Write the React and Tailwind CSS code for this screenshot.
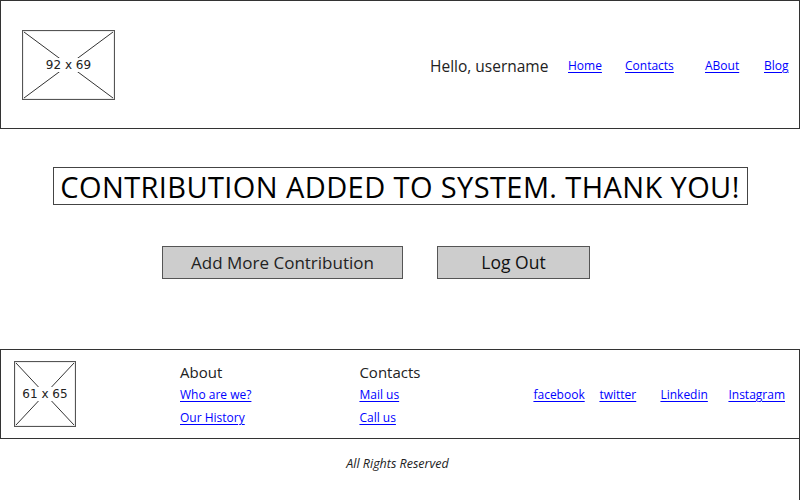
import React from 'react';

const font = { fontFamily: '"Comic Sans MS", "Open Sans", sans-serif' };

function Placeholder({ w, h, label }) {
  return (
    <div className="relative shrink-0" style={{ width: w, height: h }}>
      <svg width={w} height={h} className="absolute inset-0">
        <rect x="0.5" y="0.5" width={w - 1} height={h - 1} fill="white" stroke="#555" strokeWidth="1.2" />
        <line x1="2" y1="2" x2={w - 2} y2={h - 2} stroke="#333" strokeWidth="1" />
        <line x1={w - 2} y1="2" x2="2" y2={h - 2} stroke="#333" strokeWidth="1" />
      </svg>
      <div className="absolute inset-0 flex items-center justify-center">
        <span className="bg-white px-[1px] text-[12px] leading-[14px] text-[#222]" style={{ fontFamily: '"DejaVu Sans", sans-serif' }}>
          {label}
        </span>
      </div>
    </div>
  );
}

function Link({ children, className = '' }) {
  return <a href="#" className={`text-[#0000ff] underline underline-offset-2 ${className}`}>{children}</a>;
}

export default function App() {
  return (
    <div className="w-[800px] h-[500px] bg-white overflow-hidden flex flex-col text-[#222]" style={font}>
      <header className="h-[129px] shrink-0 border border-[#333] flex items-center">
        <div className="ml-[21px] mt-[1px]">
          <Placeholder w={93} h={70} label="92 x 69" />
        </div>
        <div className="ml-auto flex items-center mt-[5px]">
          <div className="w-[138px] text-[15.5px]">Hello, username</div>
          <div className="w-[57px] text-[12px] -mt-[2px]"><Link>Home</Link></div>
          <div className="w-[80px] text-[12px] -mt-[2px]"><Link>Contacts</Link></div>
          <div className="w-[59px] text-[12px] -mt-[2px]"><Link>ABout</Link></div>
          <div className="w-[35px] text-[12px] -mt-[2px]"><Link>Blog</Link></div>
        </div>
      </header>

      <div className="mt-[38px] flex justify-center">
        <div className="w-[695px] h-[38px] border border-[#444] flex items-center justify-center text-[29px] tracking-[0.4px] leading-none text-black">
          CONTRIBUTION ADDED TO SYSTEM. THANK YOU!
        </div>
      </div>

      <div className="mt-[41px] ml-[162px] flex gap-[34px]">
        <button className="w-[241px] h-[33px] bg-[#cdcdcd] border border-[#555] text-[17px] text-[#222]">
          Add More Contribution
        </button>
        <button className="w-[153px] h-[33px] bg-[#cdcdcd] border border-[#555] text-[17.5px] text-[#111]">
          Log Out
        </button>
      </div>

      <footer className="mt-[70px] h-[90px] shrink-0 border border-[#333] flex items-start">
        <div className="ml-[13px] mt-[11px]">
          <Placeholder w={62} h={66} label="61 x 65" />
        </div>
        <div className="ml-[104px] mt-[12px] flex flex-col">
          <div className="text-[15px] leading-[20px]">About</div>
          <div className="text-[12px] leading-[16px] mt-[5px]"><Link>Who are we?</Link></div>
          <div className="text-[12px] leading-[16px] mt-[7px]"><Link>Our History</Link></div>
        </div>
        <div className="ml-[108px] mt-[12px] flex flex-col">
          <div className="text-[15px] leading-[20px]">Contacts</div>
          <div className="text-[12px] leading-[16px] mt-[5px]"><Link>Mail us</Link></div>
          <div className="text-[12px] leading-[16px] mt-[7px]"><Link>Call us</Link></div>
        </div>
        <div className="ml-auto mt-[37px] flex text-[12px] leading-[16px] mr-[14px]">
          <div className="w-[66px]"><Link>facebook</Link></div>
          <div className="w-[61px]"><Link>twitter</Link></div>
          <div className="w-[68px]"><Link>Linkedin</Link></div>
          <div><Link>Instagram</Link></div>
        </div>
      </footer>

      <div className="flex-1 border-r border-[#333] flex justify-center pt-[16px]">
        <span className="italic text-[12.5px] leading-[18px] text-[#222] ml-[-4px]">All Rights Reserved</span>
      </div>
    </div>
  );
}
